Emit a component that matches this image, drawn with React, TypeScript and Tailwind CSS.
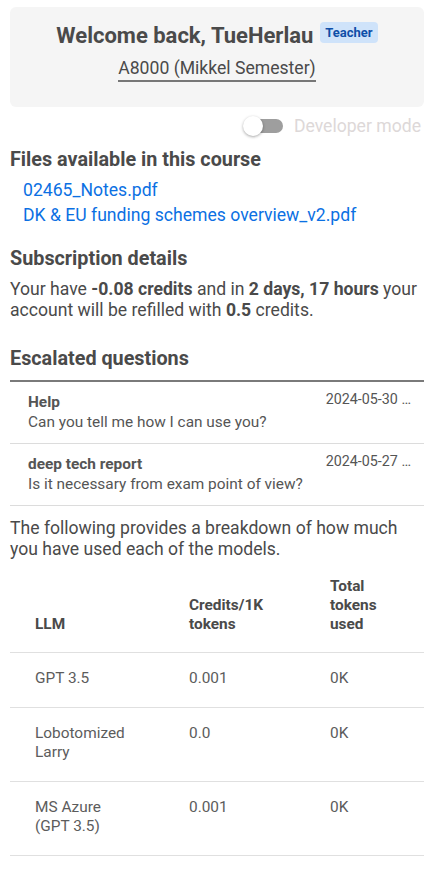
import React from "react";

const rows = [
  { name: ["GPT 3.5"], credits: "0.001", used: "0K" },
  { name: ["Lobotomized", "Larry"], credits: "0.0", used: "0K" },
  { name: ["MS Azure", "(GPT 3.5)"], credits: "0.001", used: "0K" },
];

export default function App() {
  return (
    <div className="font-['Roboto',sans-serif] text-[#4a4a4a] px-[10px] pt-[7px] pb-4 w-[434px] bg-white">
      <div className="bg-[#f5f5f5] rounded-md h-[100px] flex flex-col items-center pt-[15px]">
        <div className="flex items-start">
          <span className="text-[22px] font-bold leading-[28px]">Welcome back, TueHerlau</span>
          <span className="ml-[7px] mt-[0px] bg-[#cfe3fa] text-[#0f4fa8] text-[13px] font-bold px-[5px] rounded-[4px] h-[21px] leading-[21px]">Teacher</span>
        </div>
        <div className="text-[17.6px] mt-[6px] leading-[24px] border-b-2 border-[#777]">A8000 (Mikkel Semester)</div>
      </div>
      <div className="flex justify-end items-center mt-[7px] h-[24px]">
        <div className="relative w-[40px] h-[20px] flex items-center mr-[11px]">
          <div className="absolute left-[7px] right-[0px] h-[14px] rounded-full bg-[#9e9e9e]" />
          <div className="absolute left-0 w-[20px] h-[20px] rounded-full bg-white shadow-[0_1px_3px_rgba(0,0,0,0.35)]" />
        </div>
        <span className="text-[17.6px] text-[#ddd8d8] mr-[3px]">Developer mode</span>
      </div>
      <h2 className="text-[19.8px] font-bold mt-[9px] leading-[26px]">Files available in this course</h2>
      <div className="pl-[13px] mt-[5px] text-[17.6px] leading-[25px] text-[#0b70e3]">
        <div>02465_Notes.pdf</div>
        <div>DK &amp; EU funding schemes overview_v2.pdf</div>
      </div>
      <h2 className="text-[19.8px] font-bold mt-[18px] leading-[26px]">Subscription details</h2>
      <p className="text-[17.6px] leading-[21px] mt-[7px]">
        Your have <b>-0.08 credits</b> and in <b>2 days, 17 hours</b> your account will be refilled with <b>0.5</b> credits.
      </p>
      <h2 className="text-[19.8px] font-bold mt-[25px] leading-[26px]">Escalated questions</h2>
      <div className="mt-[8px] border-t-2 border-[#7a7a7a]">
        {[
          { t: "Help", q: "Can you tell me how I can use you?", d: "2024-05-30 …" },
          { t: "deep tech report", q: "Is it necessary from exam point of view?", d: "2024-05-27 …" },
        ].map((r) => (
          <div key={r.t} className="flex justify-between pl-[18px] pr-[13px] pt-[10px] border-b border-[#dcdcdc] h-[62px]">
            <div className="text-[15.4px] leading-[20px] text-[#555]">
              <div className="font-bold">{r.t}</div>
              <div>{r.q}</div>
            </div>
            <div className="text-[14.3px] leading-[20px] mt-[-3px] text-[#555]">{r.d}</div>
          </div>
        ))}
      </div>
      <p className="text-[17.6px] leading-[21px] mt-[12px]">
        The following provides a breakdown of how much you have used each of the models.
      </p>
      <table className="w-full table-fixed border-collapse text-[15.4px] mt-[3px]">
        <colgroup>
          <col className="w-[179px]" />
          <col className="w-[141px]" />
          <col />
        </colgroup>
        <thead>
          <tr className="border-b border-[#e0e0e0] align-bottom">
            <th className="text-left font-bold pl-[25px] pt-[14px] pb-[18px] leading-[19px]">LLM</th>
            <th className="text-left font-bold pt-[14px] pb-[18px] leading-[19px]">Credits/1K<br />tokens</th>
            <th className="text-left font-bold pt-[14px] pb-[18px] leading-[19px]">Total<br />tokens<br />used</th>
          </tr>
        </thead>
        <tbody className="text-[#5c5c5c]">
          {rows.map((r) => (
            <tr key={r.credits + r.name[0]} className="border-b border-[#e0e0e0] align-top">
              <td className="pl-[25px] pt-[16px] pb-[19px] leading-[19px]">
                {r.name.map((n) => (
                  <div key={n}>{n}</div>
                ))}
              </td>
              <td className="pt-[16px] leading-[19px]">{r.credits}</td>
              <td className="pt-[16px] leading-[19px]">{r.used}</td>
            </tr>
          ))}
        </tbody>
      </table>
    </div>
  );
}
